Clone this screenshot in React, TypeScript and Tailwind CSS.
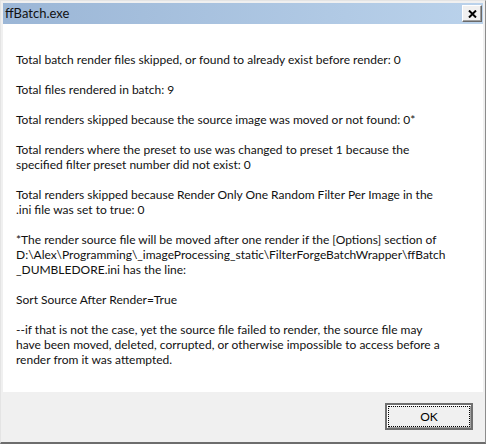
const paragraphs: string[][] = [
  ['Total batch render files skipped, or found to already exist before render: 0'],
  ['Total files rendered in batch: 9'],
  ['Total renders skipped because the source image was moved or not found: 0*'],
  [
    'Total renders where the preset to use was changed to preset 1 because the',
    'specified filter preset number did not exist: 0',
  ],
  [
    'Total renders skipped because Render Only One Random Filter Per Image in the',
    '.ini file was set to true: 0',
  ],
  [
    '*The render source file will be moved after one render if the [Options] section of',
    'D:\\Alex\\Programming\\_imageProcessing_static\\FilterForgeBatchWrapper\\ffBatch',
    '_DUMBLEDORE.ini has the line:',
  ],
  ['Sort Source After Render=True'],
  [
    '--if that is not the case, yet the source file failed to render, the source file may',
    'have been moved, deleted, corrupted, or otherwise impossible to access before a',
    'render from it was attempted.',
  ],
];

export default function App() {
  return (
    <div className="w-[486px] h-[444px] flex flex-col bg-[#f0f0f0] border-t border-l border-t-[#e4e4e4] border-l-[#e4e4e4] border-r border-r-[#8c8c8c] border-b-2 border-b-[#6d6d6d] pt-[2px] px-[2px] font-['Lato',sans-serif] text-black">
      {/* title bar */}
      <div className="h-[21px] flex items-center justify-between bg-gradient-to-r from-[#9bb6d6] to-[#bad2eb] pl-[2px] pr-[1px]">
        <span className="text-[13px] leading-none text-[#111]">ffBatch.exe</span>
        <button className="w-[20px] h-[17px] flex items-center justify-center bg-[#f0f0f0] border border-t-white border-l-white border-r-[#696969] border-b-[#696969] shadow-[inset_-1px_-1px_0_#a0a0a0]">
          <svg width="9" height="8" viewBox="0 0 9 8" aria-hidden="true">
            <path d="M1 0.5 L8 7.5 M8 0.5 L1 7.5" stroke="#000" strokeWidth="2" />
          </svg>
        </button>
      </div>

      {/* message */}
      <div className="h-[368px] bg-white pl-[13px] pt-[28px] text-[12px] leading-[15px] text-[#111]">
        {paragraphs.map((lines, i) => (
          <p key={i} className="mb-[15px] whitespace-nowrap">
            {lines.map((l, j) => (
              <span key={j} className="block">
                {l}
              </span>
            ))}
          </p>
        ))}
      </div>

      {/* footer */}
      <div className="flex-1 flex justify-end items-start pt-[11px] pr-[10px]">
        <button className="w-[88px] h-[27px] p-[1px] bg-[#f0f0f0] border-2 border-[#6f6f6f] shadow-[inset_1px_1px_0_#fff,inset_-1px_-1px_0_#a0a0a0]">
          <span className="w-full h-full flex items-center justify-center border border-dotted border-black text-[12px]">
            OK
          </span>
        </button>
      </div>
    </div>
  );
}
